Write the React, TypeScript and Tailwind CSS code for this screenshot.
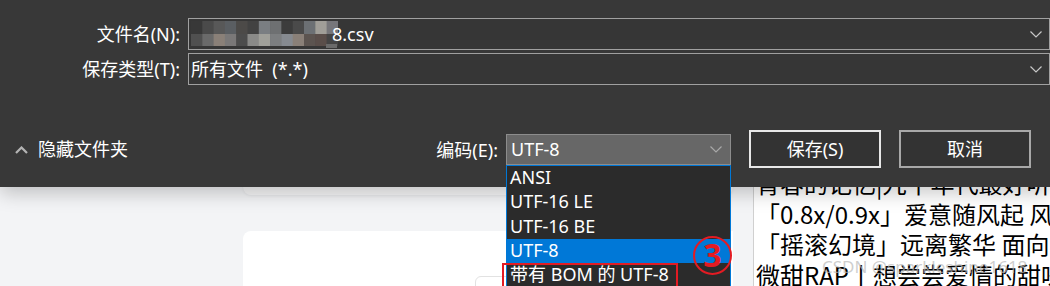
import React from "react";

const FONT = { fontFamily: '"Noto Sans", "Noto Sans CJK SC", sans-serif' };

const row1 = ["#383838", "#4a4a4a", "#585858", "#5a5e62", "#4c4a48", "#424242", "#7a7e82", "#6e7072", "#3c3c3c", "#4a4a4a", "#6c7074", "#a09e98", "#76767a"];
const row2 = ["#505050", "#6a6a6a", "#8a8078", "#7a7878", "#4c4c4c", "#8a8a88", "#a0a09a", "#7c7e80", "#868a90", "#8a8078", "#5c5450", "#5a4e4a", "#444444"];

function Mosaic() {
  const w = 11.3;
  return (
    <svg width="147" height="27" viewBox="0 0 147 27" className="shrink-0">
      {row1.map((c, i) => (
        <rect key={"a" + i} x={i * w} y={0} width={w + 0.5} height={13} fill={c} />
      ))}
      {row2.map((c, i) => (
        <rect key={"b" + i} x={i * w} y={13} width={w + 0.5} height={12} fill={c} />
      ))}
      <rect x={135} y={23} width={11} height={4} fill="#6a6a6a" />
    </svg>
  );
}

function ChevronDown({ color = "#c8c8c8" }: { color?: string }) {
  return (
    <svg width="12" height="7" viewBox="0 0 12 7">
      <polyline points="0.5,0.5 6,6 11.5,0.5" fill="none" stroke={color} strokeWidth="1.2" />
    </svg>
  );
}

function Combo({ children }: { children: React.ReactNode }) {
  return (
    <div className="flex-1 h-[32px] border border-[#a0a0a0] bg-[#363636] flex items-center pl-[2px] pr-[7px]">
      <div className="flex-1 flex items-center text-[18px] text-white">{children}</div>
      <ChevronDown />
    </div>
  );
}

export default function App() {
  return (
    <div className="relative w-[1050px] h-[286px] overflow-hidden bg-[#f3f4f6]" style={FONT}>
      {/* page underneath */}
      <div className="flex h-full">
        <div className="w-[243px] shrink-0" />
        <div className="w-[490px] shrink-0 flex flex-col">
          <div className="h-[195px] shrink-0 bg-[#f7f7f8] rounded-b-lg shadow-[0_1px_3px_rgba(0,0,0,0.06)]" />
          <div className="mt-[36px] flex-1 bg-white rounded-tl-lg">
            <div className="ml-[232px] mt-[45px] w-[120px] h-[30px] border border-[#e2e2e2] rounded-md bg-white" />
          </div>
        </div>
        <div className="w-[20px] shrink-0" />
        <div
          className="flex-1 bg-white border-l border-[#d0d0d0] pl-[2px] pt-[168px] text-[24px] leading-[30.5px] text-black whitespace-nowrap overflow-hidden"
          style={{ fontFamily: '"Noto Sans CJK SC", sans-serif' }}
        >
          <div>青春的记忆|九十年代最好听</div>
          <div>「0.8x/0.9x」爱意随风起 风</div>
          <div>「摇滚幻境」远离繁华 面向</div>
          <div>微甜RAP丨想尝尝爱情的甜味</div>
        </div>
      </div>

      {/* watermark */}
      <div className="absolute left-[822px] top-[254px] text-[17px] text-[#b8b8b8]/70 whitespace-nowrap" style={{ fontFamily: '"Noto Sans", sans-serif' }}>
        CSDN @sparkleshine1618
      </div>

      {/* save dialog */}
      <div className="absolute left-0 top-0 w-[1050px] h-[187px] bg-[#383838] shadow-[0_6px_18px_rgba(0,0,0,0.22)] text-white">
        <div className="flex items-center pt-[18px]">
          <div className="w-[180px] text-right text-[18px]">文件名(N):</div>
          <div className="w-[8px]" />
          <Combo>
            <div className="flex items-center">
              <Mosaic />
              <span className="-ml-[6px]">8.csv</span>
            </div>
          </Combo>
        </div>
        <div className="flex items-center mt-[3px]">
          <div className="w-[180px] text-right text-[18px]">保存类型(T):</div>
          <div className="w-[8px]" />
          <Combo>
            <span className="whitespace-pre">所有文件  (*.*)</span>
          </Combo>
        </div>

        <div className="flex items-center h-[38px] mt-[45px] pl-[15px] pr-[19px]">
          <svg width="13" height="8" viewBox="0 0 13 8" className="mt-[1px]">
            <polyline points="1,7 6.5,1.5 12,7" fill="none" stroke="#b4b4b4" strokeWidth="2.2" />
          </svg>
          <span className="ml-[10px] text-[18px]">隐藏文件夹</span>

          <span className="ml-auto text-[18px] mt-[2px]">编码(E):</span>
          <div className="relative ml-[8px] w-[225px] h-[31px] bg-[#676767] border border-[#8c8c8c] flex items-center pl-[4px] pr-[8px]">
            <span className="flex-1 text-[18px]">UTF-8</span>
            <ChevronDown color="#a8a8a8" />

            {/* dropdown list */}
            <div className="absolute left-[-1px] top-[30px] w-[225px] h-[130px] bg-[#2b2b2b] border border-[#0078d7] flex flex-col text-[18px]">
              <div className="h-[24px] flex items-center pl-[3px]">ANSI</div>
              <div className="h-[24px] flex items-center pl-[3px]">UTF-16 LE</div>
              <div className="h-[25px] flex items-center pl-[3px]">UTF-16 BE</div>
              <div className="h-[24px] flex items-center pl-[3px] bg-[#0078d7]">UTF-8</div>
              <div className="h-[24px] flex items-center pl-[3px]">带有 BOM 的 UTF-8</div>

              <div className="absolute left-[-5px] top-[97px] w-[176px] h-[26px] border-2 border-[#e31b23]" />
              <div
                className="absolute left-[186px] top-[70px] w-[39px] h-[39px] rounded-full border-[2.5px] border-[#e31b23] flex items-center justify-center text-[32px] font-bold leading-none text-[#e31b23]"
                style={{ fontFamily: '"Noto Sans", sans-serif' }}
              >
                3
              </div>
            </div>
          </div>

          <button className="ml-[18px] w-[132px] h-[38px] border-2 border-[#e8e8e8] bg-[#333333] text-[18px] text-white">
            保存(S)
          </button>
          <button className="ml-[18px] w-[132px] h-[38px] border-2 border-[#a8a8a8] bg-[#333333] text-[18px] text-white">
            取消
          </button>
        </div>
      </div>
    </div>
  );
}
